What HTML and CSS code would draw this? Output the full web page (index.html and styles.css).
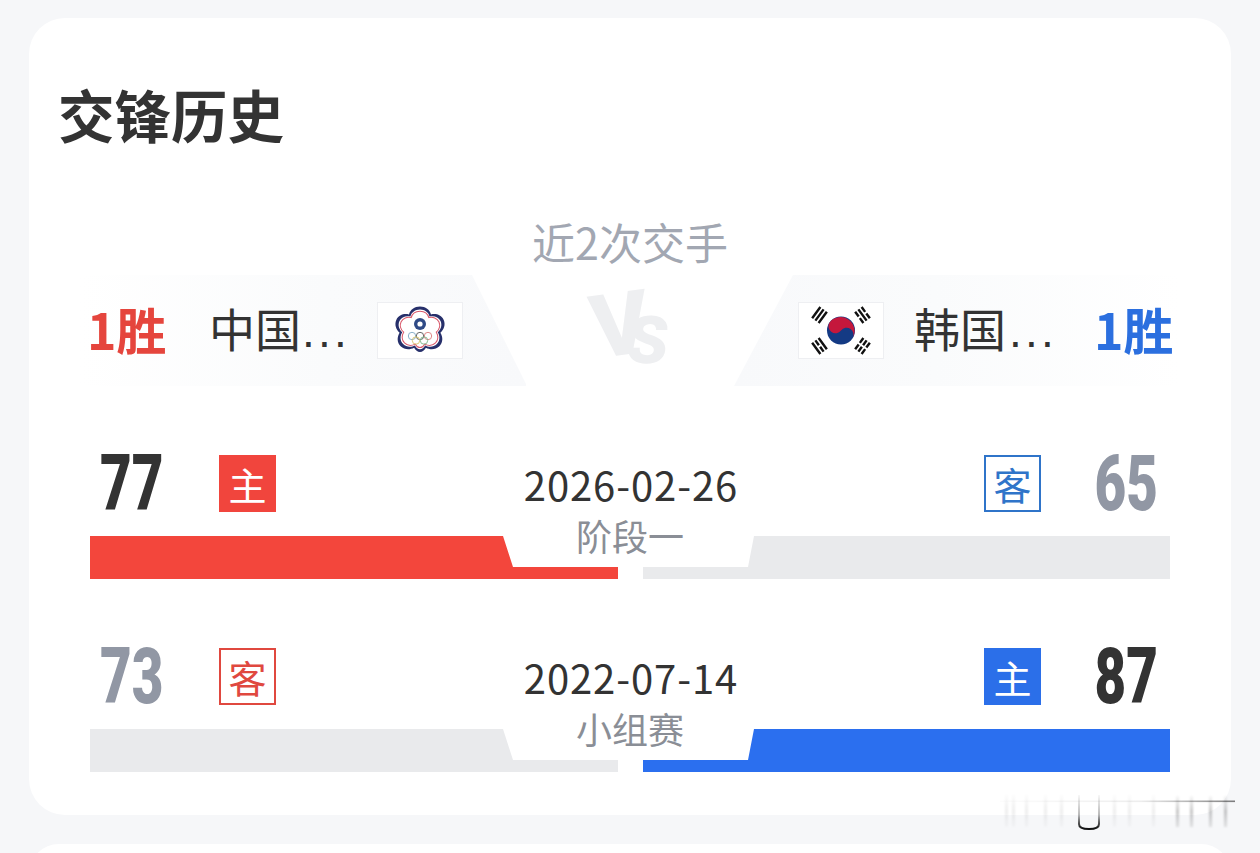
FILE: index.html
```html
<!DOCTYPE html>
<html lang="zh">
<head>
<meta charset="utf-8">
<title>交锋历史</title>
<link rel="stylesheet" href="styles.css">
</head>
<body>
<main class="page">
  <section class="card">
    <h1 class="title">交锋历史</h1>
    <p class="subtitle">近2次交手</p>
    <div class="versus">
      <div class="panel panel-left">
        <span class="wins wins-red">1胜</span>
        <span class="team team-left">中国<span class="dots">...</span></span>
        <svg class="flag" viewBox="0 0 86 57" aria-label="中华台北">
          <rect x="0.5" y="0.5" width="85" height="56" fill="#fff" stroke="#eeeff2"/>
          <path fill="#27306b" d="M43 4.500c5.500 0 9.800 3.200 11 8 5-1.300 10.500.6 12.600 5.200 2.200 4.800.4 9.800-3.200 13 2.800 4.300 2.600 10-1 13.500-3.800 3.700-9.400 3.700-13.500 1.500-1.500 2.600-3.400 4.300-5.900 4.300s-4.400-1.700-5.900-4.300c-4.100 2.200-9.700 2.200-13.500-1.500-3.600-3.500-3.800-9.200-1-13.500-3.600-3.200-5.400-8.200-3.200-13 2.100-4.600 7.600-6.500 12.600-5.200 1.200-4.800 5.500-8 11-8z"/>
          <path transform="translate(43 28) scale(.87) translate(-43 -28)" fill="#fff" d="M43 4.500c5.500 0 9.800 3.200 11 8 5-1.300 10.500.6 12.600 5.200 2.200 4.800.4 9.800-3.200 13 2.800 4.300 2.600 10-1 13.500-3.800 3.700-9.400 3.700-13.500 1.500-1.500 2.600-3.400 4.300-5.900 4.300s-4.400-1.700-5.900-4.300c-4.100 2.200-9.700 2.200-13.500-1.500-3.600-3.500-3.800-9.200-1-13.500-3.600-3.200-5.400-8.200-3.200-13 2.100-4.600 7.600-6.500 12.600-5.200 1.200-4.800 5.500-8 11-8z"/>
          <path transform="translate(43 28) scale(.8) translate(-43 -28)" fill="#fff" stroke="#d9586a" stroke-width="1.300" d="M43 4.500c5.500 0 9.800 3.200 11 8 5-1.300 10.500.6 12.600 5.200 2.200 4.800.4 9.800-3.200 13 2.800 4.300 2.600 10-1 13.500-3.800 3.700-9.400 3.700-13.500 1.500-1.500 2.600-3.400 4.300-5.900 4.300s-4.400-1.700-5.900-4.300c-4.100 2.200-9.700 2.200-13.500-1.500-3.600-3.500-3.800-9.200-1-13.500-3.600-3.200-5.400-8.200-3.200-13 2.100-4.600 7.600-6.500 12.600-5.200 1.200-4.800 5.500-8 11-8z"/>
          <circle cx="43" cy="22" r="6" fill="#2f4a86"/>
          <circle cx="43" cy="22" r="2.600" fill="#fff"/>
          <g fill="none" stroke-width=".9">
            <circle cx="35" cy="34" r="3.700" stroke="#7fa8c4"/>
            <circle cx="43" cy="34" r="3.700" stroke="#555"/>
            <circle cx="51" cy="34" r="3.700" stroke="#d97a7a"/>
            <circle cx="39" cy="38.500" r="3.700" stroke="#d8c26a"/>
            <circle cx="47" cy="38.500" r="3.700" stroke="#7db58a"/>
          </g>
        </svg>
      </div>
      <div class="vs-logo"><span class="vs-v">V</span><span class="vs-s">S</span></div>
      <div class="panel panel-right">
        <svg class="flag" viewBox="0 0 86 57" aria-label="韩国">
          <rect x="0.5" y="0.5" width="85" height="56" fill="#fff" stroke="#eeeff2"/>
          <circle cx="43" cy="28.500" r="14" fill="#143a84"/>
          <path fill="#c5173c" d="M31.400 20.700A14 14 0 0 1 54.600 36.300A7 7 0 0 0 43 28.500A7 7 0 0 1 31.400 20.700z"/>
          <g fill="none" stroke="#111" stroke-width="2.400">
            <path transform="translate(21.500 13) rotate(-54)" d="M-7-4H7M-7 0H7M-7 4H7"/>
            <path transform="translate(64.500 13) rotate(54)" d="M-7-4H-1M1-4H7M-7 0H7M-7 4H-1M1 4H7"/>
            <path transform="translate(21.500 44) rotate(54)" d="M-7-4H7M-7 0H-1M1 0H7M-7 4H7"/>
            <path transform="translate(64.500 44) rotate(-54)" d="M-7-4H-1M1-4H7M-7 0H-1M1 0H7M-7 4H-1M1 4H7"/>
          </g>
        </svg>
        <span class="team team-right">韩国<span class="dots">...</span></span>
        <span class="wins wins-blue">1胜</span>
      </div>
    </div>

    <article class="match">
      <div class="match-top">
        <div class="side side-left">
          <span class="score score-dark">77</span>
          <span class="badge badge-red-solid">主</span>
        </div>
        <span class="date">2026-02-26</span>
        <div class="side side-right">
          <span class="badge badge-blue-line">客</span>
          <span class="score score-grey">65</span>
        </div>
      </div>
      <div class="bars">
        <span class="stage">阶段一</span>
        <div class="bar bar-left bar-red"></div>
        <div class="bar bar-right bar-grey"></div>
      </div>
    </article>

    <article class="match">
      <div class="match-top">
        <div class="side side-left">
          <span class="score score-grey">73</span>
          <span class="badge badge-red-line">客</span>
        </div>
        <span class="date">2022-07-14</span>
        <div class="side side-right">
          <span class="badge badge-blue-solid">主</span>
          <span class="score score-dark">87</span>
        </div>
      </div>
      <div class="bars">
        <span class="stage">小组赛</span>
        <div class="bar bar-left bar-grey"></div>
        <div class="bar bar-right bar-blue"></div>
      </div>
    </article>
  </section>
  <section class="card card-next"></section>
  <svg class="watermark" viewBox="0 0 240 40" aria-hidden="true">
    <defs>
      <linearGradient id="fadeH" x1="0" x2="1" y1="0" y2="0">
        <stop offset="0" stop-color="#000" stop-opacity=".01"/>
        <stop offset=".6" stop-color="#000" stop-opacity=".07"/>
        <stop offset="1" stop-color="#000" stop-opacity=".5"/>
      </linearGradient>
      <linearGradient id="fadeV" x1="0" x2="0" y1="0" y2="1">
        <stop offset="0" stop-color="#000" stop-opacity=".01"/>
        <stop offset=".5" stop-color="#000" stop-opacity=".07"/>
        <stop offset="1" stop-color="#000" stop-opacity=".02"/>
      </linearGradient>
      <linearGradient id="fadeD" x1="0" x2="0" y1="0" y2="1">
        <stop offset="0" stop-color="#000" stop-opacity=".03"/>
        <stop offset=".5" stop-color="#000" stop-opacity=".22"/>
        <stop offset="1" stop-color="#000" stop-opacity=".1"/>
      </linearGradient>
      <linearGradient id="fadeU" x1="0" x2="0" y1="0" y2="1">
        <stop offset="0" stop-color="#000" stop-opacity=".03"/>
        <stop offset=".6" stop-color="#000" stop-opacity=".28"/>
        <stop offset="1" stop-color="#000" stop-opacity=".95"/>
      </linearGradient>
      <filter id="soft"><feGaussianBlur stdDeviation="1"/></filter>
      <filter id="softer"><feGaussianBlur stdDeviation=".6"/></filter>
    </defs>
    <rect x="0" y="7.500" width="235" height="1.600" fill="url(#fadeH)"/>
    <g filter="url(#soft)" fill="url(#fadeV)">
      <rect x="5" y="2" width="3" height="32"/><rect x="12" y="2" width="3" height="32"/>
      <rect x="25" y="2" width="3" height="32"/><rect x="44" y="2" width="3" height="32"/>
      <rect x="60" y="2" width="3" height="32"/><rect x="113" y="2" width="3" height="32"/>
      <rect x="128" y="2" width="3" height="32"/><rect x="152" y="2" width="3" height="32"/>
    </g>
    <g filter="url(#soft)" fill="url(#fadeD)">
      <rect x="176" y="3" width="3" height="31"/><rect x="190" y="3" width="3" height="31"/>
      <rect x="209" y="3" width="3" height="31"/><rect x="224" y="3" width="3" height="31"/>
    </g>
    <path filter="url(#softer)" d="M79 2v29c0 3 3 5 10 5s10-2 10-5V2" fill="none" stroke="url(#fadeU)" stroke-width="2"/>
  </svg>
</main>
</body>
</html>
```
FILE: styles.css
```css
* { box-sizing: border-box; }
html, body { margin: 0; padding: 0; }
body {
  height: 853px;
  overflow: hidden;
  background: #f6f7f9;
  font-family: "Noto Sans CJK SC", "Noto Sans", sans-serif;
  color: #333;
}
.page {
  position: relative;
  height: 853px;
  padding: 18px 29px 0;
  overflow: hidden;
}
.card {
  background: #fff;
  border-radius: 36px;
  padding: 63px 31px 43px;
}
.card-next {
  margin-top: 29px;
  height: 60px;
  padding: 0;
}
.title {
  margin: 0 0 0 -2px;
  font-size: 56.5px;
  line-height: 64px;
  font-weight: 700;
  color: #333;
}
.subtitle {
  margin: 71px 0 0;
  text-align: center;
  font-size: 43px;
  line-height: 50px;
  color: #a2a7b2;
}
.versus {
  display: flex;
  justify-content: space-between;
  position: relative;
  margin: 9px 20px 0;
  height: 111px;
}
.panel {
  width: 446px;
  height: 111px;
  display: flex;
  align-items: center;
}
.panel-left {
  padding-left: 7px;
  background: linear-gradient(90deg, #fff 0%, #fafbfc 55%, #f8f9fb 100%);
  clip-path: polygon(0 0, 392px 0, 447px 100%, 0 100%);
}
.panel-right {
  padding-left: 64px;
  background: linear-gradient(270deg, #fff 0%, #fafbfc 55%, #f8f9fb 100%);
  clip-path: polygon(59px 0, 100% 0, 100% 100%, 0 100%);
}
.wins {
  font-size: 50px;
  font-weight: 700;
  line-height: 52px;
  margin-top: -6px;
  width: 78px;
  flex: none;
  white-space: nowrap;
}
.wins-red { color: #e5453d; }
.wins-blue { color: #2b6fdf; }
.team {
  font-size: 46px;
  line-height: 54px;
  margin-top: -4px;
  color: #333;
  white-space: nowrap;
  flex: none;
}
.team-left { margin-left: 44px; width: 135px; }
.team-right { margin-left: 30px; width: 180px; }
.dots {
  font-family: "Liberation Sans", sans-serif;
  letter-spacing: 3.2px;
  font-size: 46px;
  margin-left: 1px;
}
.team-right .dots { margin-left: 3px; }
.flag {
  width: 86px;
  height: 57px;
  flex: none;
}
.team-left + .flag { margin-left: 33px; }
.vs-logo {
  position: absolute;
  left: 506px;
  top: 0;
  width: 92px;
  height: 100px;
  color: #eeeff1;
  font-family: Roboto, "Liberation Sans", sans-serif;
  font-weight: 900;
}
.vs-v {
  position: absolute;
  left: 5px;
  top: 10px;
  font-size: 88px;
  line-height: 80px;
  transform: rotate(-8deg);
}
.vs-s {
  position: absolute;
  left: 41px;
  top: 33px;
  font-size: 66px;
  line-height: 66px;
  transform: skewX(-6deg);
}
.match {
  margin: 69px 30px 0;
}
.match-top {
  display: grid;
  grid-template-columns: 1fr auto 1fr;
  height: 57px;
  padding: 0 12px 0 10px;
}
.side {
  display: flex;
  align-items: center;
}
.side-right { justify-content: flex-end; }
.score {
  font-family: Roboto, "Liberation Sans", sans-serif;
  font-size: 77px;
  line-height: 57px;
  font-weight: 900;
  white-space: nowrap;
  transform: translateY(1px) scaleX(.71);
}
.side-left .score { width: 119px; transform-origin: left center; }
.side-right .score { width: 117px; text-align: right; transform-origin: right center; }
.score-dark { color: #333; }
.score-grey { color: #9197a4; }
.badge {
  width: 57px;
  height: 57px;
  flex: none;
  display: flex;
  align-items: center;
  justify-content: center;
  font-size: 38px;
  line-height: 1;
}
.badge-red-solid { background: #f1453d; color: #fff; }
.badge-blue-solid { background: #2b6fe9; color: #fff; }
.badge-red-line { border: 2px solid #e0483f; color: #e0483f; }
.badge-blue-line { border: 2px solid #2f74c9; color: #2f74c9; }
.date {
  font-size: 40px;
  line-height: 50px;
  letter-spacing: .9px;
  padding: 4px 0 0 4px;
  color: #333;
  white-space: nowrap;
}
.bars {
  position: relative;
  display: flex;
  justify-content: space-between;
  margin-top: 24px;
  height: 43px;
}
.stage {
  position: absolute;
  left: 0;
  right: 0;
  top: -23px;
  text-align: center;
  font-size: 36px;
  line-height: 44px;
  color: #8a8e96;
}
.bar { height: 43px; }
.bar-left {
  width: 528px;
  clip-path: polygon(0 0, 413px 0, 423px 31px, 100% 31px, 100% 100%, 0 100%);
}
.bar-right {
  width: 527px;
  clip-path: polygon(0 31px, 105px 31px, 111px 0, 100% 0, 100% 100%, 0 100%);
}
.bar-red { background: #f3463c; }
.bar-blue { background: #2b6fef; }
.bar-grey { background: #e9eaec; }
.watermark {
  position: absolute;
  left: 1000px;
  top: 793px;
  width: 240px;
  height: 40px;
}
```
